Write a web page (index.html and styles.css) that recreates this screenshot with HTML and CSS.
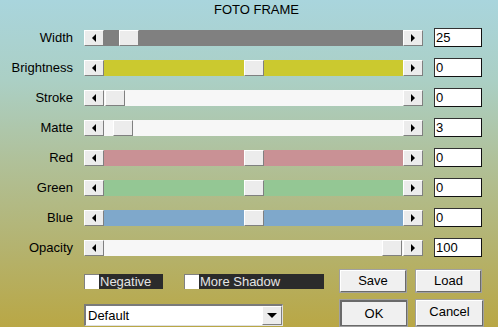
FILE: index.html
```html
<!DOCTYPE html>
<html lang="en">
<head>
  <meta charset="UTF-8">
  <title>Foto Frame</title>
  <link rel="stylesheet" href="styles.css">
</head>
<body>
  <div class="dialog">
    <div class="title">FOTO FRAME</div>

    <div class="row">
      <div class="label">Width</div>
      <div class="slider">
        <div class="arrow-btn"><span class="tri-left"></span></div>
        <div class="track gray"><div class="thumb" style="left: 15px;"></div></div>
        <div class="arrow-btn"><span class="tri-right"></span></div>
      </div>
      <div class="value">25</div>
    </div>

    <div class="row">
      <div class="label">Brightness</div>
      <div class="slider">
        <div class="arrow-btn"><span class="tri-left"></span></div>
        <div class="track yellow"><div class="thumb" style="left: 140px;"></div></div>
        <div class="arrow-btn"><span class="tri-right"></span></div>
      </div>
      <div class="value">0</div>
    </div>

    <div class="row">
      <div class="label">Stroke</div>
      <div class="slider">
        <div class="arrow-btn"><span class="tri-left"></span></div>
        <div class="track white"><div class="thumb" style="left: 1px;"></div></div>
        <div class="arrow-btn"><span class="tri-right"></span></div>
      </div>
      <div class="value">0</div>
    </div>

    <div class="row">
      <div class="label">Matte</div>
      <div class="slider">
        <div class="arrow-btn"><span class="tri-left"></span></div>
        <div class="track white"><div class="thumb" style="left: 9px;"></div></div>
        <div class="arrow-btn"><span class="tri-right"></span></div>
      </div>
      <div class="value">3</div>
    </div>

    <div class="row">
      <div class="label">Red</div>
      <div class="slider">
        <div class="arrow-btn"><span class="tri-left"></span></div>
        <div class="track red"><div class="thumb" style="left: 140px;"></div></div>
        <div class="arrow-btn"><span class="tri-right"></span></div>
      </div>
      <div class="value">0</div>
    </div>

    <div class="row">
      <div class="label">Green</div>
      <div class="slider">
        <div class="arrow-btn"><span class="tri-left"></span></div>
        <div class="track green"><div class="thumb" style="left: 140px;"></div></div>
        <div class="arrow-btn"><span class="tri-right"></span></div>
      </div>
      <div class="value">0</div>
    </div>

    <div class="row">
      <div class="label">Blue</div>
      <div class="slider">
        <div class="arrow-btn"><span class="tri-left"></span></div>
        <div class="track blue"><div class="thumb" style="left: 140px;"></div></div>
        <div class="arrow-btn"><span class="tri-right"></span></div>
      </div>
      <div class="value">0</div>
    </div>

    <div class="row">
      <div class="label">Opacity</div>
      <div class="slider">
        <div class="arrow-btn"><span class="tri-left"></span></div>
        <div class="track white"><div class="thumb" style="left: 278px;"></div></div>
        <div class="arrow-btn"><span class="tri-right"></span></div>
      </div>
      <div class="value">100</div>
    </div>

    <div class="actions">
      <div class="checks">
        <div class="check"><span class="box"></span><span class="check-label neg">Negative</span></div>
        <div class="check"><span class="box"></span><span class="check-label shadow">More Shadow</span></div>
      </div>
      <div class="btn">Save</div>
      <div class="btn load">Load</div>
    </div>

    <div class="actions bottom">
      <div class="dropdown">
        <span class="dd-text">Default</span>
        <span class="dd-btn"><span class="tri-down"></span></span>
      </div>
      <div class="btn ok">OK</div>
      <div class="btn cancel">Cancel</div>
    </div>
  </div>
</body>
</html>
```

FILE: styles.css
```css
body {
  margin: 0;
  font-family: "Liberation Sans", Arial, sans-serif;
  font-size: 13px;
  color: #000;
}
.dialog {
  width: 498px;
  height: 327px;
  overflow: hidden;
  background: linear-gradient(to bottom, #a9d5dd 0%, #abcfc4 25%, #b0c098 50%, #b4b370 75%, #b9a745 100%);
}
.title {
  padding: 2px 0 0 214px;
  line-height: 15px;
  height: 15px;
}
.row {
  display: flex;
  align-items: center;
  height: 19px;
  margin-top: 11px;
}
.row:first-of-type {
  margin-top: 10px;
}
.label {
  width: 73px;
  margin-right: 11px;
  text-align: right;
}
.slider {
  display: flex;
  width: 339px;
  height: 16px;
  margin-right: 11px;
}
.arrow-btn, .thumb, .dd-btn {
  box-sizing: border-box;
  background: #ececec;
  border-top: 1px solid #fff;
  border-left: 1px solid #fff;
  border-right: 1px solid #808080;
  border-bottom: 1px solid #808080;
}
.arrow-btn {
  width: 20px;
  height: 16px;
  display: flex;
  align-items: center;
  justify-content: center;
}
.tri-left {
  width: 0;
  height: 0;
  border-top: 4px solid transparent;
  border-bottom: 4px solid transparent;
  border-right: 4px solid #000;
}
.tri-right {
  width: 0;
  height: 0;
  border-top: 4px solid transparent;
  border-bottom: 4px solid transparent;
  border-left: 4px solid #000;
}
.tri-down {
  width: 0;
  height: 0;
  border-left: 5px solid transparent;
  border-right: 5px solid transparent;
  border-top: 5px solid #000;
}
.track {
  position: relative;
  flex: 1;
}
.gray { background: #808080; }
.yellow { background: #cbc92f; }
.white { background: #f7f7f7; }
.red { background: #c99195; }
.green { background: #94c794; }
.blue { background: #7fa8cb; }
.thumb {
  position: absolute;
  top: 0;
  width: 20px;
  height: 16px;
}
.value {
  box-sizing: border-box;
  width: 48px;
  height: 19px;
  background: #fff;
  border: 1px solid #111;
  border-top-color: #333;
  border-left-color: #333;
  padding-left: 1px;
  line-height: 17px;
}
.actions {
  display: flex;
  align-items: center;
  margin-top: 13px;
}
.checks {
  display: flex;
  gap: 21px;
  margin-left: 84px;
  width: 256px;
}
.check {
  display: flex;
  height: 15px;
}
.box {
  box-sizing: border-box;
  width: 15px;
  height: 15px;
  background: #fff;
  border-top: 1px solid #808080;
  border-left: 1px solid #808080;
}
.check-label {
  background: #2b2b2b;
  color: #e4e4e4;
  line-height: 15px;
  padding-left: 1px;
  box-sizing: border-box;
}
.neg { width: 64px; }
.shadow { width: 125px; }
.btn {
  box-sizing: border-box;
  width: 66px;
  height: 22px;
  background: #f0f0f0;
  border-top: 1px solid #fff;
  border-left: 1px solid #fff;
  border-right: 1px solid #6a6a6a;
  border-bottom: 1px solid #6a6a6a;
  box-shadow: 0 0 0 1px #a0a0a0;
  text-align: center;
  line-height: 20px;
}
.load {
  margin-left: 10px;
  width: 65px;
}
.bottom {
  align-items: flex-start;
  margin-top: 8px;
}
.dropdown {
  box-sizing: border-box;
  display: flex;
  width: 199px;
  height: 22px;
  margin: 4px 57px 0 84px;
  background: #fff;
  border-top: 2px solid #7a7a7a;
  border-left: 2px solid #7a7a7a;
  border-right: 1px solid #e0e0e0;
  border-bottom: 1px solid #e0e0e0;
}
.dd-text {
  flex: 1;
  padding-left: 2px;
  line-height: 19px;
}
.dd-btn {
  width: 20px;
  height: 19px;
  display: flex;
  align-items: center;
  justify-content: center;
}
.ok {
  width: 67px;
  height: 26px;
  border-top: 2px solid #6a6a6a;
  border-left: 2px solid #6a6a6a;
  line-height: 24px;
}
.cancel {
  width: 67px;
  height: 26px;
  margin-left: 9px;
  line-height: 22px;
}
```
